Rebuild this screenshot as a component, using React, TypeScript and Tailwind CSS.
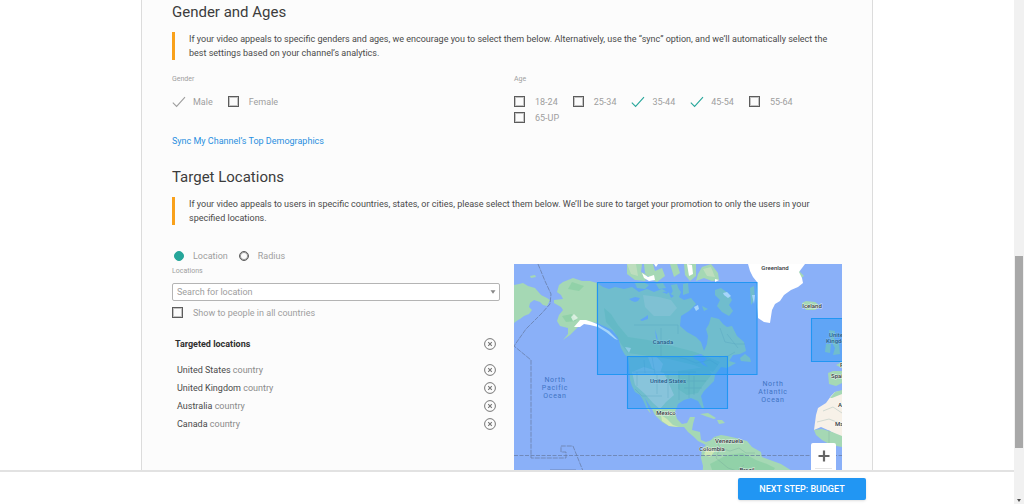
import { useState } from "react";
import type { ReactNode } from "react";

const AGES = ["18-24", "25-34", "35-44", "45-54", "55-64", "65-UP"];

const COUNTRIES = ["United States", "United Kingdom", "Australia", "Canada"];

type CheckProps = {
  label: string;
  checked: boolean;
  onChange: () => void;
  muted?: boolean;
};

function Check({ label, checked, onChange, muted }: CheckProps) {
  return (
    <label className="flex h-4 items-start gap-[10px] pt-[2px] leading-[13px] text-[#9e9e9e]">
      <span className="grid size-[11px] shrink-0 place-items-center">
        <input
          type="checkbox"
          checked={checked}
          onChange={onChange}
          className="size-[11px] appearance-none border border-[#5c5c5c] inset-ring inset-ring-[#5c5c5c]/35 [grid-area:1/1] checked:border-transparent checked:inset-ring-transparent"
        />
        {checked && (
          <svg
            viewBox="0 0 14 12"
            className={`pointer-events-none h-3 w-[14px] [grid-area:1/1] ${muted ? "text-[#9e9e9e]" : "text-[#26a69a]"}`}
            fill="none"
            stroke="currentColor"
            strokeWidth="1.1"
          >
            <path d="M0.8 6.6 4.6 10.4 13 1.2" />
          </svg>
        )}
      </span>
      {label}
    </label>
  );
}

function Radio({ label, checked, onChange }: CheckProps) {
  return (
    <label className="flex h-4 items-start gap-[9px] pt-[3px] leading-[11px] text-[#9e9e9e]">
      <input
        type="radio"
        name="mode"
        checked={checked}
        onChange={onChange}
        className="size-[10px] shrink-0 appearance-none rounded-full border border-[#5c5c5c] inset-ring inset-ring-[#5c5c5c]/60 checked:border-[#26a69a] checked:bg-[#26a69a] checked:inset-ring-transparent"
      />
      {label}
    </label>
  );
}

function Hint({ children }: { children: ReactNode }) {
  return (
    <p className="mt-2 border-l-3 border-[#f9a11b] pl-[14px] leading-[14px] text-[#4a4a4a]">
      {children}
    </p>
  );
}

function RemoveButton({ label }: { label: string }) {
  return (
    <button type="button" aria-label={label} className="size-3 text-[#757575]">
      <svg viewBox="0 0 12 12" className="size-3" fill="none" stroke="currentColor">
        <circle cx="6" cy="6" r="5.4" />
        <path d="M4.2 4.2 7.8 7.8M7.8 4.2 4.2 7.8" strokeWidth="1.1" />
      </svg>
    </button>
  );
}

function WorldMap() {
  return (
    <svg
      viewBox="0 0 328 250"
      className="block w-full bg-[#8ab0f8]"
      role="img"
      aria-label="Map of targeted locations"
    >
      {/* land */}
      <g fill="#a5d8b4">
        <path d="M0 21 5 20 9 19 14 22 21 24 27 31 33 34 36 36 33 42 29 41 26 38 20 36 16 39 15 43 18 46 15 50 10 52 6 55 4 56 0 59Z" />
        <path d="M16 12 21 11 22 13 17 14Z" />
        <path d="M43 28 45 21 49 18 54 16 59 14 68 17 76 17 83 19 89 23 95 25 101 23 110 25 118 23 125 28 133 25 140 28 148 25 157 30 162 22 167 28 165 33 170 36 177 34 182 40 175 47 167 52 166 62 173 68 182 73 187 78 190 87 193 80 194 72 192 65 195 60 197 53 205 55 209 60 213 63 218 62 221 68 223 72 230 78 232 87 226 90 219 91 215 97 222 99 213 104 207 103 201 111 200 117 196 121 190 127 187 132 190 144 188 144 184 137 177 134 170 136 164 140 161 148 163 155 168 160 173 159 176 153 181 153 179 160 178 166 186 168 187 176 192 178 198 176 192 181 184 177 180 173 174 168 170 163 162 163 155 162 148 158 144 154 141 151 138 145 134 139 131 134 134 143 137 150 133 145 129 136 126 131 121 128 118 122 116 116 115 101 114 93 111 91 107 84 104 73 98 66 92 63 83 59 76 58 71 57 66 61 62 65 56 71 49 76 54 70 54 64 46 62 43 57 45 51 49 46 47 43 40 39 40 36 49 35 47 31Z" />
        <path d="M188 185 193 180 200 173 207 171 213 172 222 174 233 177 238 183 247 188 248 193 256 196 267 200 275 205 284 211 282 224 277 234 272 250 202 250 194 232 188 216 189 202 187 194Z" />
        <path d="M113 0 128 0 127 8 134 11 131 17 121 16 113 10Z" />
        <path d="M130 0 139 0 141 7 148 4 151 12 143 18 137 15 131 9ZM156 0 163 0 166 9 160 13ZM170 0 182 0 182 12 176 17 171 11ZM188 3 197 0 204 9 205 16 198 17 190 14 182 17 184 10Z" />
        <path d="M121 19 129 18 135 21 131 25 123 24ZM142 20 149 19 152 24 145 25ZM157 21 163 20 165 26 159 28ZM169 20 174 19 175 29 169 31Z" />
        <path d="M201 26 207 24 214 29 218 36 215 41 219 47 215 52 208 48 203 42 206 36 201 31ZM188 42 194 45 190 47ZM236 24 240 22 241 35 237 41Z" />
        <path d="M226 94 231 90 236 94 237 98 227 97ZM186 150 194 149 202 154 200 155 191 152ZM203 156 208 156 211 159 205 160Z" />
        <path d="M288 39 292 37 301 38 306 42 301 46 292 46Z" />
        <path d="M315 66 321 67 320 74 325 80 326 90 319 91 321 84 317 77ZM312 80 317 80 316 89 311 88Z" />
        <path d="M314 109 319 107 328 107 328 119 322 122 315 120ZM322 101 328 98 328 104Z" />
        <path d="M283 1 286 8 290 12 284 16 288 19 281 17 277 8Z" />
      </g>
      {/* dry land */}
      <path
        fill="#e4ead9"
        d="M118 108 130 103 143 107 150 109 155 120 160 131 152 138 146 145 139 139 131 130 121 121ZM134 93 142 92 149 100 146 109 138 104Z"
        opacity="0.65"
      />
      <path
        fill="#cfe3c4"
        d="M129 31 145 33 157 36 163 44 156 52 140 52 131 43ZM113 0 122 0 124 12 117 10ZM189 5 197 3 201 13 193 12Z"
        opacity="0.6"
      />
      {/* forest */}
      <path
        fill="#83cda0"
        d="M90 44 97 50 104 61 114 73 134 76 162 83 181 88 196 94 206 98 199 108 180 101 155 95 128 91 114 89 107 80 100 67 92 58ZM164 107 192 103 198 110 187 124 184 129 173 131 164 125ZM196 200 213 191 229 189 242 196 253 200 261 204 252 218 227 224 202 217ZM58 18 70 22 65 27 54 25ZM48 52 58 50 62 57 52 58Z"
        opacity="0.6"
      />
      <path
        fill="#cfe8b4"
        d="M147 151 153 155 159 161 165 163 155 162 148 157ZM193 183 201 187 196 193 190 191Z"
      />
      {/* lakes and inlets */}
      <path
        fill="#8ab0f8"
        d="M115 35 121 33 126 34 124 37 121 38 118 37ZM126 56 131 53 134 51 134 55 128 57ZM178 92 187 90 193 95 189 98 194 103 189 101 185 97 181 95ZM141 65 143 72 144 77 142 74ZM155 29 160 32 157 34ZM148 28 155 27 153 30Z"
      />
      {/* ice and mountains */}
      <g fill="#fff">
        <path d="M234 0 291 0 288 4 285 8 288 14 289 19 284 23 277 26 270 31 266 37 261 40 258 46 256 59 250 58 244 54 243 43 242 30 243 18 239 13 236 7Z" />
        <path d="M128 9 134 13 140 11 141 16 135 17 130 14ZM173 0 178 1 179 10 175 12ZM140 0 144 0 142 3ZM201 15 205 16 201 18ZM209 29 213 28 217 32 214 34 210 31ZM180 43 184 41 185 45 182 47ZM238 31 241 31 240 40Z" />
        <path d="M60 63 66 56 72 56 78 58 83 60 88 63 95 67 104 76 101 75 92 68 84 63 76 61 70 60 66 63Z" />
        <path d="M111 83 117 84 115 89ZM57 53 60 50 64 54 59 57Z" opacity="0.6" />
      </g>
      <path
        fill="#f7f1e8"
        d="M321 128 328 127 328 174 316 167 307 163 300 166 302 151 304 144 312 139 317 132Z"
      />
      <path
        fill="#a5d8b4"
        d="M321 128 328 126 328 130 318 134 316 134ZM300 166 308 165 318 168 328 172 328 183 317 181 308 176 302 171Z"
      />
      {/* borders and the date line */}
      <g fill="none" stroke="#64789f" strokeWidth="0.7">
        <path d="M24 0 31 17 37 30 36 40 28 49 12 65 0 82 17 96 17 194 52 194 52 188 47 188 47 182 59 182 69 207" strokeDasharray="5 1" />
        <path d="M0 191.5H328" strokeDasharray="4 1.5" />
        <path d="M36 206H62L72 218" />
      </g>
      <g fill="none" stroke="#6d9c98" strokeWidth="0.4" opacity="0.7">
        <path d="M83 19V59M116 93H163L172 95 182 99 196 96 204 101M130 96 131 109M123 108V122M138 93 141 110M143 110V130M154 110V134M165 110V136M175 108V134M119 108H182M121 125 128 132H148M168 117H192M170 124H188M180 112V131M120 61H164V70M147 64V92" />
        <path d="M206 64 211 78 222 80 231 80M213 70 224 84M205 93 214 92 221 88" />
        <path d="M201 173 206 184 216 187 225 184 232 189 241 189M206 184 202 194 214 204 223 207 230 201M309 147 319 143 328 149M303 158 315 155 328 160M315 166V180" />
      </g>
      {/* labels that lie under the targeted areas */}
      <g
        className="font-[Roboto,sans-serif] text-[6px] font-medium"
        fill="#263238"
        stroke="#fff"
        strokeOpacity="0.4"
        strokeWidth="1"
        paintOrder="stroke"
      >
        <text x="149" y="80" textAnchor="middle">Canada</text>
        <text x="154" y="118.5" textAnchor="middle">United States</text>
        <text x="315" y="73">United</text>
        <text x="312" y="79">Kingdom</text>
      </g>
      {/* targeted areas */}
      <g fill="#2196f3" fillOpacity="0.4" stroke="#2196f3" strokeWidth="1.1">
        <path d="M83.5 18.5H243V110.5H83.5Z" />
        <path d="M113.5 92.5H213.5V144.5H113.5Z" />
        <path d="M297.5 54.5H330V97.5H297.5Z" />
      </g>
      <g
        className="font-[Roboto,sans-serif] text-[6px] font-medium"
        fill="#33393d"
        stroke="#fff"
        strokeOpacity="0.7"
        strokeWidth="1"
        paintOrder="stroke"
        textAnchor="middle"
      >
        <text x="261" y="6">Greenland</text>
        <text x="298" y="44">Iceland</text>
        <text x="152" y="151">Mexico</text>
        <text x="215" y="179">Venezuela</text>
        <text x="198" y="187">Colombia</text>
        <text x="233" y="208">Brazil</text>
        <g textAnchor="start">
          <text x="326" y="103">France</text>
          <text x="317" y="114">Spain</text>
          <text x="324" y="143">Algeria</text>
          <text x="321" y="162">Mali</text>
        </g>
      </g>
      <g
        className="font-[Roboto,sans-serif] text-[7px] tracking-widest"
        fill="#3f74c4"
        textAnchor="middle"
      >
        <text x="41" y="118">North</text>
        <text x="41" y="126">Pacific</text>
        <text x="41" y="134">Ocean</text>
        <text x="259" y="122">North</text>
        <text x="259" y="130">Atlantic</text>
        <text x="259" y="138">Ocean</text>
      </g>
    </svg>
  );
}

export default function App() {
  const [genders, setGenders] = useState(["Male"]);
  const [ages, setAges] = useState(["35-44", "45-54"]);
  const [mode, setMode] = useState("Location");
  const [everywhere, setEverywhere] = useState(false);

  function toggle(list: string[], value: string) {
    return list.includes(value) ? list.filter((v) => v !== value) : [...list, value];
  }

  return (
    <div className="flex h-screen bg-white font-[Roboto,sans-serif] text-[9px] text-[#4a4a4a]">
      <div className="flex min-w-0 flex-1 flex-col">
        <main className="min-h-0 flex-1 overflow-hidden">
          <div className="mx-auto min-h-full max-w-[732px] border-x border-[#dcdcdc] bg-[#fcfcfc] px-[30px]">
            <section>
              <h2 className="text-[15px] leading-6 text-[#3c3c3c]">Gender and Ages</h2>
              <Hint>
                If your video appeals to specific genders and ages, we encourage you to select them
                below. Alternatively, use the “sync” option, and we’ll automatically select the best
                settings based on your channel’s analytics.
              </Hint>

              <div className="mt-3 grid grid-cols-2 gap-[14px]">
                <fieldset>
                  <legend className="text-[7px] leading-[15px] text-[#9e9e9e]">Gender</legend>
                  <div className="mt-[7px] flex gap-[15px]">
                    {["Male", "Female"].map((g) => (
                      <Check
                        key={g}
                        label={g}
                        muted
                        checked={genders.includes(g)}
                        onChange={() => setGenders(toggle(genders, g))}
                      />
                    ))}
                  </div>
                </fieldset>
                <fieldset>
                  <legend className="text-[7px] leading-[15px] text-[#9e9e9e]">Age</legend>
                  <div className="mt-[7px] flex flex-wrap gap-x-[15px]">
                    {AGES.map((age) => (
                      <Check
                        key={age}
                        label={age}
                        checked={ages.includes(age)}
                        onChange={() => setAges(toggle(ages, age))}
                      />
                    ))}
                  </div>
                </fieldset>
              </div>

              <a href="#sync" className="mt-1 block leading-[23px] text-[#2a8fe0]">
                Sync My Channel’s Top Demographics
              </a>
            </section>

            <section className="mt-3">
              <h2 className="text-[15px] leading-6 text-[#3c3c3c]">Target Locations</h2>
              <Hint>
                If your video appeals to users in specific countries, states, or cities, please
                select them below. We’ll be sure to target your promotion to only the users in your
                specified locations.
              </Hint>

              <div className="mt-[23px] grid grid-cols-2 gap-[14px]">
                <div>
                  <div className="flex gap-[11px] pl-[2px]">
                    {["Location", "Radius"].map((m) => (
                      <Radio key={m} label={m} checked={mode === m} onChange={() => setMode(m)} />
                    ))}
                  </div>

                  <label htmlFor="locations" className="block text-[7px] leading-[15px] text-[#9e9e9e]">
                    Locations
                  </label>
                  <div className="mt-1 grid items-center">
                    <select
                      id="locations"
                      className="h-[18px] w-full appearance-none rounded-xs border border-[#b4b4b4] bg-white px-1 pt-px text-[#9e9e9e] [grid-area:1/1]"
                    >
                      <option>Search for location</option>
                    </select>
                    <svg
                      viewBox="0 0 6 4"
                      className="pointer-events-none mr-1 h-1 w-[6px] justify-self-end [grid-area:1/1]"
                      fill="#888"
                    >
                      <path d="M0.5 0.3h5L3 3.8Z" />
                    </svg>
                  </div>

                  <div className="mt-1">
                    <Check
                      label="Show to people in all countries"
                      checked={everywhere}
                      onChange={() => setEverywhere(!everywhere)}
                    />
                  </div>

                  <div className="mt-[14px] flex h-[18px] items-center justify-between pr-1 pl-[3px]">
                    <h3 className="pt-px font-bold text-[#2f2f2f]">Targeted locations</h3>
                    <RemoveButton label="Remove all locations" />
                  </div>
                  <ul className="mt-2">
                    {COUNTRIES.map((country) => (
                      <li
                        key={country}
                        className="flex h-[18px] items-center justify-between pr-1 pl-[5px]"
                      >
                        <span className="pt-px">
                          {country} <span className="text-[#8a8a8a]">country</span>
                        </span>
                        <RemoveButton label={`Remove ${country}`} />
                      </li>
                    ))}
                  </ul>
                </div>

                <div className="relative mt-4 self-start">
                  <WorldMap />
                  <div className="absolute top-[179px] right-[6px] flex w-[25px] flex-col items-center rounded-xs bg-white text-[#666]">
                    <button type="button" aria-label="Zoom in" className="grid h-[25px] w-full place-items-center">
                      <svg viewBox="0 0 12 12" className="size-3" stroke="currentColor" strokeWidth="2.2">
                        <path d="M6 0.5V11.5M0.5 6H11.5" />
                      </svg>
                    </button>
                    <span className="h-px w-[17px] bg-[#e6e6e6]" />
                    <button type="button" aria-label="Zoom out" className="grid h-[25px] w-full place-items-center">
                      <svg viewBox="0 0 12 12" className="size-3" stroke="currentColor" strokeWidth="2.2">
                        <path d="M0.5 6H11.5" />
                      </svg>
                    </button>
                  </div>
                </div>
              </div>
            </section>
          </div>
        </main>

        <footer className="border-t-2 border-[#e2e2e2] bg-white pt-[6px] pb-1">
          <div className="mx-auto flex max-w-[732px] justify-end pr-[7px]">
            <button
              type="button"
              className="h-[22px] w-32 rounded-xs bg-[#2196f3] pt-px font-medium text-white uppercase shadow-sm"
            >
              Next step: Budget
            </button>
          </div>
        </footer>
      </div>

      {/* scroll track */}
      <div aria-hidden="true" className="flex w-[10px] flex-col items-center bg-[#f1f1f1]">
        <div className="flex-[256]" />
        <div className="w-2 flex-[192] bg-[#a8a8a8]" />
        <div className="flex flex-[54] items-end pb-[2px]">
          <svg viewBox="0 0 4 3" className="h-[3px] w-1" fill="#505050">
            <path d="M0 0h4L2 3Z" />
          </svg>
        </div>
      </div>
    </div>
  );
}
